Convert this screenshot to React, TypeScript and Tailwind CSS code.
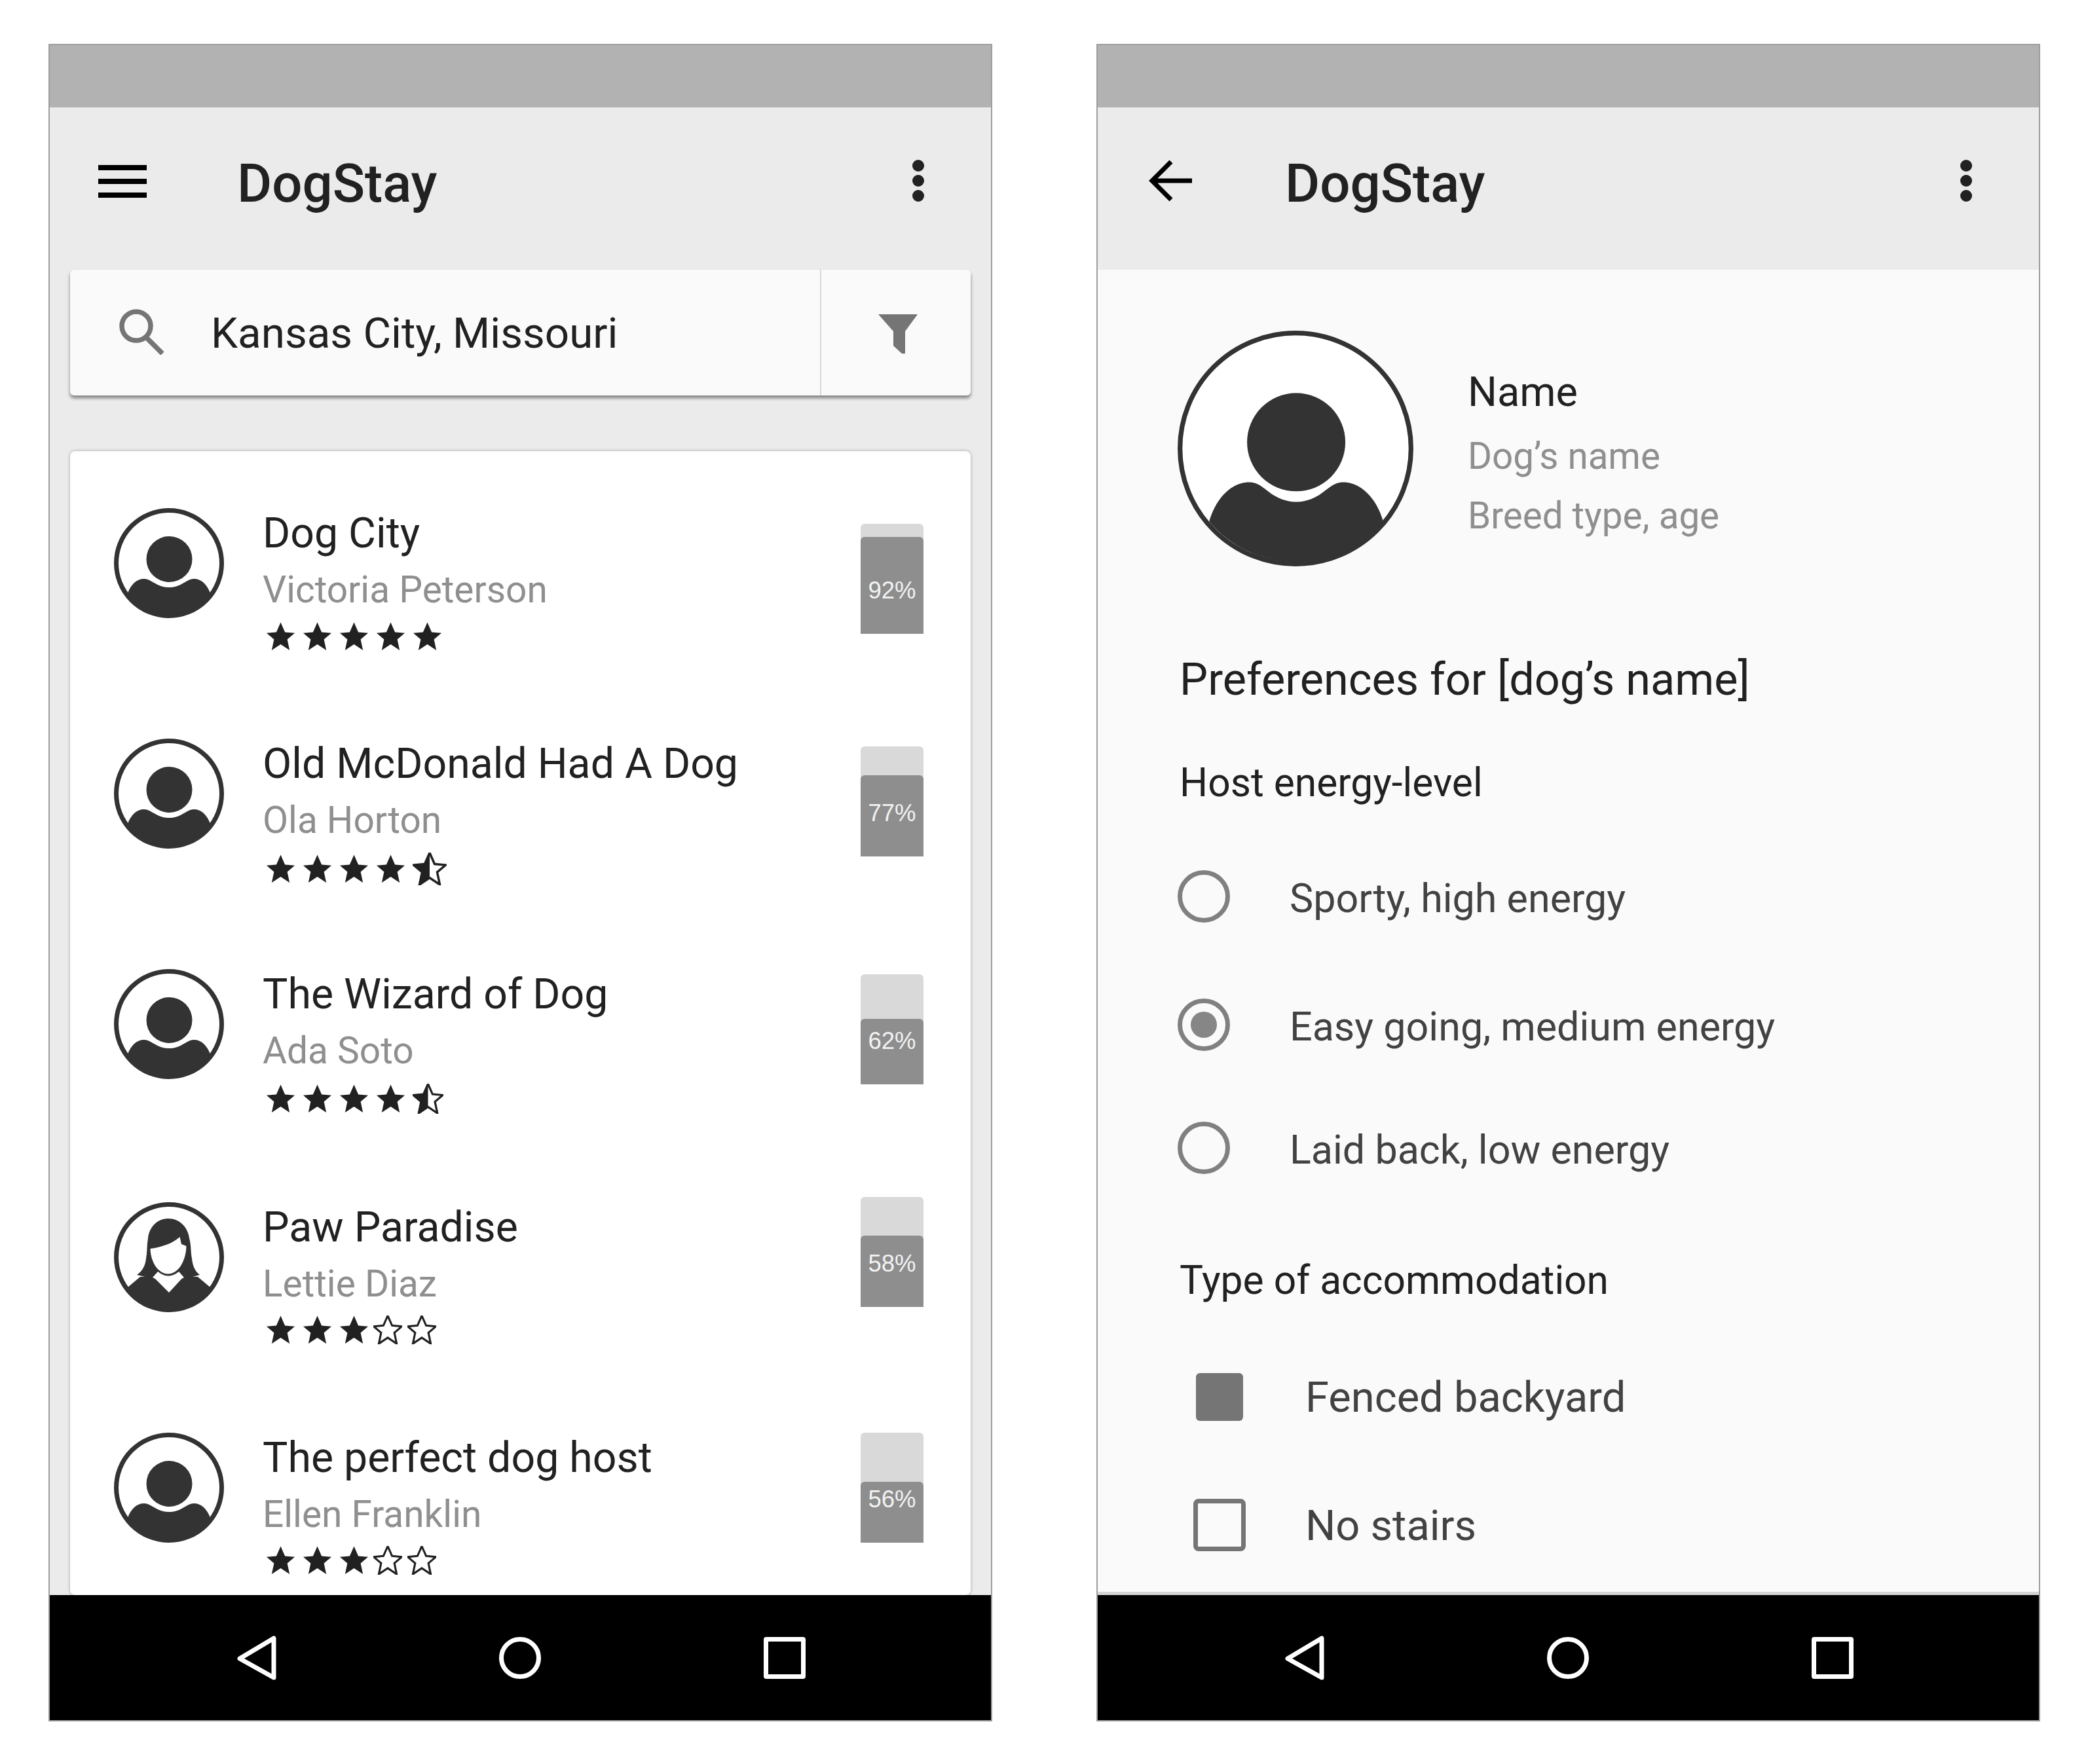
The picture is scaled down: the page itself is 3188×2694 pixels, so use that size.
import type { ReactNode } from "react";

type Place = {
  name: string;
  host: string;
  full: number;
  half?: "lg" | "sm";
  empty?: number;
  pct: number;
  rowH: number;
  barTop: number;
  fillH: number;
  starsTop: number;
  woman?: boolean;
};

const places: Place[] = [
  { name: "Dog City", host: "Victoria Peterson", full: 5, pct: 92, rowH: 352, barTop: 24, fillH: 148, starsTop: 17 },
  { name: "Old McDonald Had A Dog", host: "Ola Horton", full: 4, half: "lg", pct: 77, rowH: 352, barTop: 12, fillH: 124, starsTop: 20 },
  { name: "The Wizard of Dog", host: "Ada Soto", full: 4, half: "sm", pct: 62, rowH: 356, barTop: 8, fillH: 100, starsTop: 19 },
  { name: "Paw Paradise", host: "Lettie Diaz", full: 3, empty: 2, pct: 58, rowH: 352, barTop: -8, fillH: 109, starsTop: 16, woman: true },
  { name: "The perfect dog host", host: "Ellen Franklin", full: 3, empty: 2, pct: 56, rowH: 352, barTop: 0, fillH: 93, starsTop: 16 },
];

const STAR = "50,1 65,35 99,38 73,60 81,98 50,77 19,98 27,60 1,38 35,35";

function FullStar() {
  return (
    <svg viewBox="0 0 100 100" className="h-[44px] w-[45px]">
      <polygon points={STAR} fill="#212121" />
    </svg>
  );
}

function EmptyStar() {
  return (
    <svg viewBox="0 0 100 100" className="h-[44px] w-[44px]">
      <polygon points={STAR} fill="none" stroke="#212121" strokeWidth="7" />
    </svg>
  );
}

function HalfStar({ size }: { size: "lg" | "sm" }) {
  return (
    <svg
      viewBox="0 0 100 100"
      className={size === "lg" ? "-mt-[3px] h-[50px] w-[52px]" : "-mt-[1px] h-[46px] w-[47px]"}
    >
      <polygon points={STAR} fill="none" stroke="#212121" strokeWidth="7" />
      <polygon points="50,1 35,35 1,38 27,60 19,98 50,77" fill="#212121" />
    </svg>
  );
}

function Stars({ p }: { p: Place }) {
  return (
    <div className="flex h-[44px] items-start pl-[5px]" style={{ marginTop: p.starsTop }}>
      <div className="flex gap-[11px]">
        {Array.from({ length: p.full }, (_, i) => (
          <FullStar key={i} />
        ))}
      </div>
      {p.half && (
        <div className="ml-[11px]">
          <HalfStar size={p.half} />
        </div>
      )}
      {p.empty && (
        <div className="ml-[7px] flex gap-[8px]">
          {Array.from({ length: p.empty }, (_, i) => (
            <EmptyStar key={i} />
          ))}
        </div>
      )}
    </div>
  );
}

function PersonAvatar() {
  return (
    <svg viewBox="0 0 168 168" className="h-[168px] w-[168px] shrink-0">
      <circle cx="84" cy="84" r="80.5" fill="#fff" stroke="#333" strokeWidth="7" />
      <circle cx="84.5" cy="78" r="35" fill="#333" />
      <path
        d="M21 130 C26 116 35 108 46 108 C53 108 57 112 63 115 C70 119 76 121 84 121 C92 121 98 119 105 115 C111 112 115 108 122 108 C133 108 142 116 147 130 A78 78 0 0 1 21 130 Z"
        fill="#333"
      />
    </svg>
  );
}

function LargeAvatar() {
  return (
    <svg viewBox="0 0 168 168" className="h-[360px] w-[360px] shrink-0">
      <circle cx="84" cy="84" r="82.3" fill="#fff" stroke="#333" strokeWidth="3.4" />
      <circle cx="84.5" cy="79.5" r="35" fill="#333" />
      <path
        d="M22.5 136 C27 120 38 108 51 108 C58 108 62 113 68 117 C73 120 78 122 84.5 122 C91 122 96 120 101 117 C107 113 111 108 118 108 C131 108 142 120 146.5 136 A81 81 0 0 1 22.5 136 Z"
        fill="#333"
      />
    </svg>
  );
}

function WomanAvatar() {
  return (
    <svg viewBox="0 0 168 168" className="h-[168px] w-[168px] shrink-0">
      <circle cx="84" cy="84" r="80.5" fill="#fff" stroke="#333" strokeWidth="7" />
      <path
        d="M83 25 C66 25 54 38 52 55 C50 66 51 76 49 86 C48 96 44 105 35 111 L52 115 L116 115 L131 111 C123 105 120 96 119 86 C117 76 118 66 115 55 C113 38 100 25 83 25 Z"
        fill="#333"
      />
      <path
        d="M55.5 71 C72 69 90 63 100.5 53 L103 64 L110.5 67 C110 90 98 109.5 83 109.5 C68 109.5 56 92 55.5 71 Z"
        fill="#fff"
      />
      <path
        d="M21 130 L40 114 L59 113 L84 138 L107 113 L128 114 L147 130 A78 78 0 0 1 21 130 Z"
        fill="#333"
      />
      <path d="M59 115 L67 106 C72 110 77 112.5 83 112.5 C89 112.5 94 110 99 106 L107 115 L95.5 121 L84 137 L72 121 Z" fill="#fff" />
    </svg>
  );
}

function Dots() {
  return (
    <svg viewBox="0 0 20 64" className="h-[64px] w-[20px]">
      <circle cx="10" cy="9" r="9" fill="#212121" />
      <circle cx="10" cy="32" r="9" fill="#212121" />
      <circle cx="10" cy="55" r="9" fill="#212121" />
    </svg>
  );
}

function Header({ icon }: { icon: ReactNode }) {
  return (
    <div className="flex h-[248px] items-start bg-[#ebebeb] pt-[80px]">
      <div className="ml-[73px] flex w-[76px] justify-center">{icon}</div>
      <div className="-mt-[8px] ml-[137px] text-[81.5px] leading-[88px] font-medium text-[#212121]">DogStay</div>
      <div className="mr-[101px] ml-auto">
        <Dots />
      </div>
    </div>
  );
}

function NavBar() {
  return (
    <div className="flex h-[191px] shrink-0 items-center gap-[340px] bg-black pl-[286px]">
      <svg viewBox="0 0 60 68" className="h-[68px] w-[60px]">
        <path d="M56 4 L56 64 L4 35 Z" fill="none" stroke="#fff" strokeWidth="7" strokeLinejoin="round" />
      </svg>
      <div className="h-[64px] w-[64px] rounded-full border-[7px] border-white" />
      <div className="h-[64px] w-[64px] rounded-[4px] border-[7px] border-white" />
    </div>
  );
}

function Phone({ children }: { children: ReactNode }) {
  return (
    <div className="flex h-[2562px] w-[1441px] shrink-0 flex-col border-2 border-[#9e9e9e] font-[Roboto,sans-serif]">
      <div className="h-[95px] shrink-0 bg-[#b2b2b2]" />
      {children}
      <NavBar />
    </div>
  );
}

function SearchBar() {
  return (
    <div className="mx-[31px] flex h-[192px] shrink-0 rounded-[6px] bg-[#fafafa] shadow-[0_4px_5px_rgba(0,0,0,0.45)]">
      <div className="flex flex-1 items-center pl-[74px]">
        <svg viewBox="0 0 70 70" className="-mt-[2px] h-[70px] w-[70px]">
          <circle cx="27" cy="26" r="22" fill="none" stroke="#757575" strokeWidth="7.5" />
          <line x1="42" y1="43" x2="67" y2="68" stroke="#757575" strokeWidth="7.5" />
        </svg>
        <span className="ml-[71px] pt-[2px] text-[65.5px] leading-[72px] text-[#212121]">Kansas City, Missouri</span>
      </div>
      <div className="flex w-[230px] items-center border-l-2 border-[#d9d9d9] pl-[87px]">
        <svg viewBox="0 0 60 60" className="mt-[4px] h-[60px] w-[60px]">
          <polygon points="0,0 60,0 41,26 41,60 36,60 23,48 23,26" fill="#757575" />
        </svg>
      </div>
    </div>
  );
}

function PlaceRow({ p }: { p: Place }) {
  return (
    <div className="flex items-start pr-[72px] pl-[67px]" style={{ height: p.rowH }}>
      {p.woman ? <WomanAvatar /> : <PersonAvatar />}
      <div className="ml-[59px] pt-[2px]">
        <div className="text-[64.4px] leading-[72px] text-[#212121]">{p.name}</div>
        <div className="mt-[19px] text-[56.8px] leading-[64px] text-[#8f8f8f]">{p.host}</div>
        <Stars p={p} />
      </div>
      <div
        className="ml-auto flex h-[168px] w-[96px] flex-col justify-end rounded-t-[6px] bg-[#d9d9d9]"
        style={{ marginTop: p.barTop }}
      >
        <div
          className="rounded-t-[6px] bg-[#8e8e8e] pb-[46px] text-center font-['Liberation_Sans',sans-serif] text-[36.5px] leading-[40px] text-[#f2f2f2]"
          style={{ height: p.fillH }}
        >
          <div className="flex h-full items-end justify-center">{p.pct}%</div>
        </div>
      </div>
    </div>
  );
}

function SearchScreen() {
  return (
    <Phone>
      <Header
        icon={
          <div className="mt-[8px] flex w-[74px] flex-col gap-[13px]">
            <div className="h-[8px] bg-black" />
            <div className="h-[8px] bg-black" />
            <div className="h-[8px] bg-black" />
          </div>
        }
      />
      <div className="flex min-h-0 flex-1 flex-col bg-[#ebebeb]">
        <SearchBar />
        <div className="mx-[31px] mt-[85px] min-h-0 flex-1 overflow-hidden rounded-[8px] bg-white pt-[87px] shadow-[0_0_5px_rgba(0,0,0,0.3)]">
          {places.map((p) => (
            <PlaceRow key={p.name} p={p} />
          ))}
        </div>
      </div>
    </Phone>
  );
}

function Radio({ label, checked, className }: { label: string; checked?: boolean; className: string }) {
  return (
    <div className={`flex h-[80px] items-center ${className}`}>
      <div className="flex h-[80px] w-[80px] items-center justify-center rounded-full border-[7px] border-[#808080]">
        {checked && <div className="h-[40px] w-[40px] rounded-full bg-[#868686]" />}
      </div>
      <span className="ml-[91px] pt-[5px] text-[61px] leading-[68px] text-[#424242]">{label}</span>
    </div>
  );
}

function Check({ label, checked, className }: { label: string; checked?: boolean; className: string }) {
  return (
    <div className={`flex h-[80px] items-center ${className}`}>
      <div className="ml-[24px] flex h-[80px] w-[80px] items-center justify-center">
        {checked ? (
          <div className="h-[73px] w-[72px] rounded-[6px] bg-[#757575]" />
        ) : (
          <div className="h-[80px] w-[80px] rounded-[8px] border-[7px] border-[#757575]" />
        )}
      </div>
      <span className="ml-[91px] pt-[2px] text-[65px] leading-[68px] text-[#424242]">{label}</span>
    </div>
  );
}

function PreferencesScreen() {
  return (
    <Phone>
      <Header
        icon={
          <svg viewBox="0 0 66 64" className="h-[64px] w-[66px]">
            <path d="M66 32 L6 32 M34 3 L5 32 L34 61" fill="none" stroke="#000" strokeWidth="7" />
          </svg>
        }
      />
      <div className="min-h-0 flex-1 overflow-hidden border-b-[5px] border-[#d4d4d4] bg-[#fafafa] pt-[93px] pl-[122px]">
        <div className="flex items-start">
          <LargeAvatar />
          <div className="mt-[58px] ml-[83px]">
            <div className="text-[63px] leading-[72px] text-[#212121]">Name</div>
            <div className="mt-[30px] text-[56.5px] leading-[64px] text-[#8f8f8f]">Dog’s name</div>
            <div className="mt-[27px] text-[56.5px] leading-[64px] text-[#8f8f8f]">Breed type, age</div>
          </div>
        </div>
        <div className="mt-[134px] pl-[3px] text-[68.4px] leading-[78px] text-[#212121]">Preferences for [dog’s name]</div>
        <div className="mt-[85px] pl-[3px] text-[60.5px] leading-[68px] text-[#212121]">Host energy-level</div>
        <Radio className="mt-[99px]" label="Sporty, high energy" />
        <Radio className="mt-[116px]" label="Easy going, medium energy" checked />
        <Radio className="mt-[108px]" label="Laid back, low energy" />
        <div className="mt-[129px] pl-[3px] text-[60.5px] leading-[68px] text-[#212121]">Type of accommodation</div>
        <Check className="mt-[103px]" label="Fenced backyard" checked />
        <Check className="mt-[116px]" label="No stairs" />
      </div>
    </Phone>
  );
}

export default function App() {
  return (
    <div className="flex h-[2694px] w-[3188px] gap-[159px] bg-white pt-[67px] pl-[74px]">
      <SearchScreen />
      <PreferencesScreen />
    </div>
  );
}
